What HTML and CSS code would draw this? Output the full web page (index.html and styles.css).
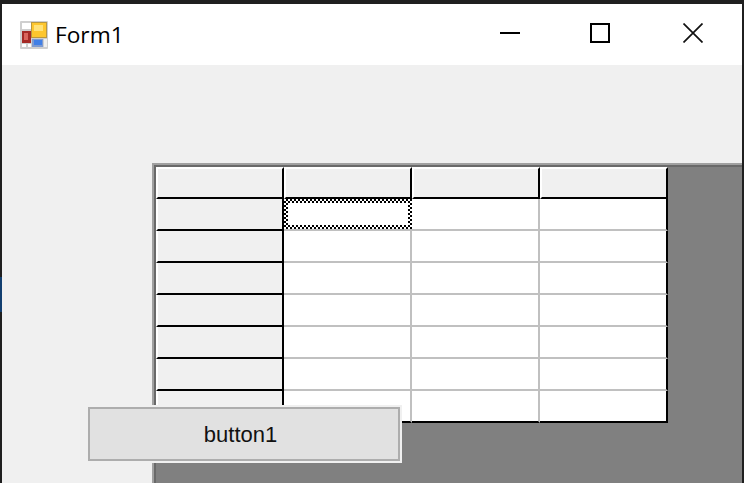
FILE: index.html
```html
<!DOCTYPE html>
<html lang="en">
<head>
    <meta charset="UTF-8">
    <title>Form1</title>
    <link rel="stylesheet" href="styles.css">
</head>
<body>
    <div class="window">
        <div class="title-bar">
            <svg class="app-icon" width="28" height="28" viewBox="0 0 28 28">
                <filter id="soft"><feGaussianBlur stdDeviation="0.35"/></filter>
                <g filter="url(#soft)">
                    <rect x="0" y="0" width="28" height="28" rx="1" fill="#cfcfcf"/>
                    <rect x="2" y="2" width="9" height="6" fill="#ffffff"/>
                    <rect x="2" y="10" width="9" height="12" fill="#a52b26"/>
                    <rect x="4" y="12" width="4" height="7" fill="#d9655c"/>
                    <rect x="2" y="23" width="4" height="3" fill="#ffffff"/>
                    <rect x="8" y="23" width="3" height="3" fill="#ffffff"/>
                    <rect x="11" y="1" width="16" height="16" fill="#b8973f"/>
                    <rect x="12" y="2" width="14" height="14" fill="#fdc62f"/>
                    <rect x="14" y="4" width="9" height="6" fill="#ffe27a"/>
                    <rect x="12" y="18" width="11" height="8" fill="#7d9ad0"/>
                    <rect x="14" y="19" width="8" height="5" fill="#3f7fe6"/>
                    <rect x="24" y="18" width="3" height="8" fill="#efefef"/>
                </g>
            </svg>
            <span class="form-title">Form1</span>
            <div class="window-buttons">
                <svg width="20" height="20" viewBox="0 0 20 20"><path d="M0 10H20" stroke="#000" stroke-width="2"/></svg>
                <svg width="20" height="20" viewBox="0 0 20 20"><rect x="1" y="1" width="18" height="18" fill="none" stroke="#000" stroke-width="2"/></svg>
                <svg class="close-icon" width="20" height="20" viewBox="0 0 20 20"><path d="M0.5 0.5L19.5 19.5M19.5 0.5L0.5 19.5" stroke="#111" stroke-width="1.7"/></svg>
            </div>
        </div>
        <div class="client">
            <div class="data-grid">
                <div class="cells">
                    <div class="cell corner"></div>
                    <div class="cell head"></div>
                    <div class="cell head"></div>
                    <div class="cell head"></div>

                    <div class="cell row-head"></div>
                    <div class="cell focused"></div>
                    <div class="cell"></div>
                    <div class="cell"></div>

                    <div class="cell row-head"></div>
                    <div class="cell"></div>
                    <div class="cell"></div>
                    <div class="cell"></div>

                    <div class="cell row-head"></div>
                    <div class="cell"></div>
                    <div class="cell"></div>
                    <div class="cell"></div>

                    <div class="cell row-head"></div>
                    <div class="cell"></div>
                    <div class="cell"></div>
                    <div class="cell"></div>

                    <div class="cell row-head"></div>
                    <div class="cell"></div>
                    <div class="cell"></div>
                    <div class="cell"></div>

                    <div class="cell row-head"></div>
                    <div class="cell"></div>
                    <div class="cell"></div>
                    <div class="cell"></div>

                    <div class="cell row-head last"></div>
                    <div class="cell last"></div>
                    <div class="cell last"></div>
                    <div class="cell last"></div>
                </div>
            </div>
            <button class="form-button">button1</button>
        </div>
        <div class="edge-mark"></div>
    </div>
</body>
</html>
```

FILE: styles.css
```css
html, body {
    margin: 0;
    height: 100%;
    overflow: hidden;
}

.window {
    position: relative;
    box-sizing: border-box;
    width: 744px;
    height: 483px;
    display: flex;
    flex-direction: column;
    border-top: 4px solid #1f1f1f;
    border-left: 2px solid #1f1f1f;
    border-right: 2px solid #1f1f1f;
    background-color: #f0f0f0;
}

.title-bar {
    height: 61px;
    flex: none;
    display: flex;
    align-items: center;
    background-color: #fff;
}

.app-icon {
    margin-left: 18px;
    margin-right: 7px;
}

.form-title {
    font-family: "Open Sans", sans-serif;
    font-size: 22.7px;
    color: #000;
}

.window-buttons {
    margin-left: auto;
    margin-right: 39px;
    margin-top: -3px;
    display: flex;
    gap: 70px;
}

.close-icon {
    margin-left: 3px;
}

.client {
    position: relative;
    flex: 1;
    min-height: 0;
    padding: 98px 0 0 150px;
}

.data-grid {
    height: 100%;
    box-sizing: border-box;
    border-top: 2px solid #a0a0a0;
    border-left: 2px solid #a0a0a0;
    background-color: #808080;
    box-shadow: inset 2px 2px 0 #696969;
    padding: 2px 0 0 2px;
}

.cells {
    display: grid;
    grid-template-columns: repeat(4, 128px);
    grid-auto-rows: 32px;
    width: 512px;
}

.cell {
    box-sizing: border-box;
    background-color: #fff;
    border-right: 2px solid #c0c0c0;
    border-bottom: 2px solid #c0c0c0;
}

.cell:nth-child(4n) {
    border-right-color: #000;
}

.cell.last {
    border-bottom-color: #000;
}

.corner, .head, .row-head {
    background-color: #f0f0f0;
    border-right-color: #000;
    border-bottom-color: #000;
    border-top: 2px solid #fff;
    border-left: 2px solid #fff;
}

.row-head {
    border-top: none;
}

.head {
    border-bottom-color: #000;
}

/* checkered focus frame, squares are 2px */
.focused {
    border: 4px solid transparent;
    background: linear-gradient(#fff, #fff) padding-box,
        repeating-conic-gradient(#000 0 25%, #fff 0 50%) 0 0 / 4px 4px border-box;
    box-shadow: 0 2px 0 #c0c0c0;
    height: 30px;
}

.form-button {
    position: absolute;
    left: 86px;
    top: 342px;
    box-sizing: border-box;
    width: 312px;
    height: 54px;
    padding: 1px 7px 0 0;
    border: 2px solid #adadad;
    outline: 2px solid #f0f0f0;
    background-color: #e1e1e1;
    font-family: "Liberation Sans", Arial, sans-serif;
    font-size: 22px;
    color: #111;
}

/* sliver of whatever sits behind the window */
.edge-mark {
    position: absolute;
    left: -2px;
    top: 273px;
    width: 2px;
    height: 35px;
    background-color: #123f70;
}
```
